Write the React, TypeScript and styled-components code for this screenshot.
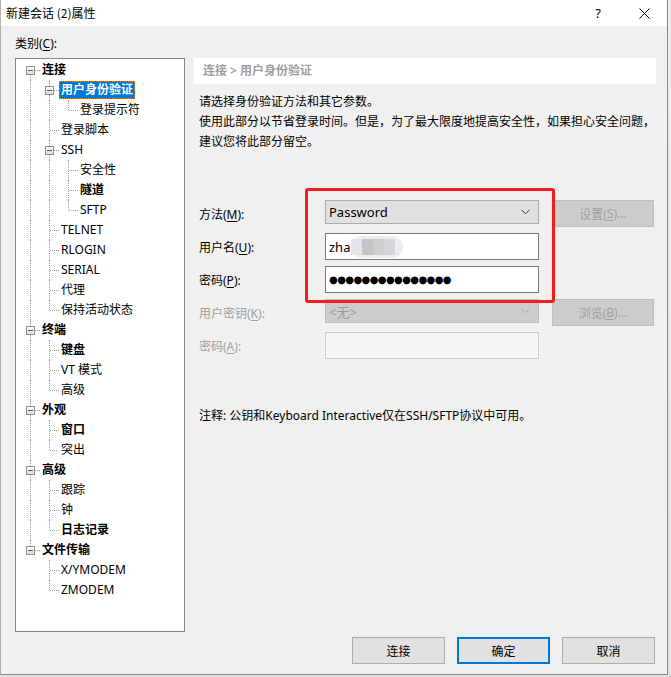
import React from "react";
import styled, { createGlobalStyle, css } from "styled-components";

const GlobalStyle = createGlobalStyle`
  html, body {
    margin: 0;
    padding: 0;
    background: #d9d9d9;
  }
  body {
    font-family: "Noto Sans", "Noto Sans CJK SC", sans-serif;
    font-size: 12px;
    color: #000;
  }
`;

const Page = styled.div`
  width: 671px;
  height: 677px;
  overflow: hidden;
  background: linear-gradient(#ececec, #e0e0e0);
`;

const Window = styled.div`
  width: 668px;
  height: 675px;
  box-sizing: border-box;
  background: #f0f0f0;
  border-right: 1px solid #8a8a8a;
  border-bottom: 1px solid #8a8a8a;
  border-left: 1px solid #b0b0b0;
  display: flex;
  flex-direction: column;
`;

const TitleBar = styled.div`
  height: 26px;
  flex: none;
  background: #fff;
  display: flex;
  align-items: center;
`;

const Title = styled.div`
  flex: 1;
  padding-left: 5px;
  font-size: 12px;
  line-height: 26px;
  font-family: "Noto Sans CJK SC", sans-serif;
`;

const TitleButton = styled.div`
  width: 46px;
  height: 26px;
  display: flex;
  align-items: center;
  justify-content: center;
  font-size: 13px;
  font-family: "Noto Sans", sans-serif;
`;

const Body = styled.div`
  flex: 1;
  display: flex;
  flex-direction: column;
  padding: 9px 0 0 14px;
`;

const CategoryLabel = styled.div`
  height: 18px;
  line-height: 18px;
  margin-bottom: 5px;
`;

const Mnemonic = styled.span`
  text-decoration: underline;
  text-underline-offset: 2px;
`;

const MainRow = styled.div`
  display: flex;
  gap: 9px;
  height: 574px;
`;

const TreePanel = styled.div`
  width: 170px;
  box-sizing: border-box;
  background: #fff;
  border: 1px solid #828790;
  padding: 1px 0 0 5px;
`;

const TreeRow = styled.div`
  height: 20px;
  display: flex;
  align-items: center;
`;

const dotted = css`
  content: "";
  position: absolute;
  border-color: #a0a0a0;
  border-style: dotted;
  border-width: 0;
`;

const GuideCell = styled.div<{ $line: boolean }>`
  width: 19px;
  height: 20px;
  flex: none;
  position: relative;
  &::before {
    ${dotted};
    display: ${(p) => (p.$line ? "block" : "none")};
    left: 9px;
    top: 0;
    bottom: 0;
    border-left-width: 1px;
  }
`;

const ElbowCell = styled.div<{ $up: boolean; $down: boolean }>`
  width: 19px;
  height: 20px;
  flex: none;
  position: relative;
  &::before {
    ${dotted};
    left: 9px;
    top: ${(p) => (p.$up ? "0" : "10px")};
    bottom: ${(p) => (p.$down ? "0" : "10px")};
    border-left-width: 1px;
  }
  &::after {
    ${dotted};
    left: 10px;
    width: 9px;
    top: 10px;
    border-top-width: 1px;
  }
`;

const ExpandBox = styled.div`
  position: absolute;
  z-index: 1;
  left: 5px;
  top: 6px;
  width: 9px;
  height: 9px;
  box-sizing: border-box;
  border: 1px solid #919191;
  background: linear-gradient(#ffffff, #dcdcdc);
  &::after {
    content: "";
    position: absolute;
    left: 1px;
    top: 3px;
    width: 5px;
    height: 1px;
    background: #3f5a8c;
  }
`;

const NodeLabel = styled.span<{ $bold?: boolean; $selected?: boolean }>`
  padding: 0 2px;
  height: 18px;
  line-height: 18px;
  white-space: nowrap;
  font-weight: ${(p) => (p.$bold ? 700 : 400)};
  ${(p) =>
    p.$selected &&
    css`
      background: #0078d7;
      color: #fff;
      outline: 1px dotted #e08a00;
      outline-offset: -1px;
    `}
`;

const RightPanel = styled.div`
  width: 462px;
  display: flex;
  flex-direction: column;
  position: relative;
`;

const Breadcrumb = styled.div`
  height: 26px;
  line-height: 26px;
  background: #fff;
  padding-left: 9px;
  color: #a0a0a0;
  font-weight: 700;
`;

const Description = styled.div`
  margin-top: 8px;
  padding-left: 5px;
`;

const DescLine = styled.div`
  height: 20px;
  line-height: 20px;
`;

const FormGrid = styled.div`
  margin-top: 48px;
  padding-left: 5px;
  display: grid;
  grid-template-columns: 126px 214px 13px 102px;
  grid-auto-rows: 27px;
  row-gap: 6px;
`;

const FieldLabel = styled.div<{ $disabled?: boolean }>`
  grid-column: 1;
  align-self: center;
  color: ${(p) => (p.$disabled ? "#a0a0a0" : "#000")};
`;

const Select = styled.div<{ $disabled?: boolean }>`
  grid-column: 2;
  height: 24px;
  box-sizing: border-box;
  display: flex;
  align-items: center;
  justify-content: space-between;
  padding: 0 8px 0 3px;
  font-size: 13px;
  background: ${(p) => (p.$disabled ? "#cccccc" : "#e1e1e1")};
  border: 1px solid ${(p) => (p.$disabled ? "#bfbfbf" : "#adadad")};
  color: ${(p) => (p.$disabled ? "#9a9a9a" : "#000")};
`;

const Input = styled.div<{ $disabled?: boolean }>`
  grid-column: 2;
  height: 27px;
  box-sizing: border-box;
  display: flex;
  align-items: center;
  padding-left: 3px;
  font-size: 13px;
  background: ${(p) => (p.$disabled ? "#f5f5f5" : "#fff")};
  border: 1px solid ${(p) => (p.$disabled ? "#cccccc" : "#7a7a7a")};
`;

const Blurred = styled.span`
  display: inline-flex;
  align-items: center;
  width: 52px;
  height: 22px;
  margin-left: 1px;
  border-radius: 11px;
  background: #ededed;
  filter: blur(0.6px);
`;

const BlurBlock = styled.span<{ $shade: string }>`
  width: 11px;
  height: 16px;
  background: ${(p) => p.$shade};
`;

const Dots = styled.span`
  font-family: "DejaVu Sans", sans-serif;
  font-size: 10px;
  letter-spacing: -0.6px;
  line-height: 1;
`;

const SideButton = styled.div`
  grid-column: 4;
  height: 27px;
  box-sizing: border-box;
  display: flex;
  align-items: center;
  justify-content: center;
  background: #cccccc;
  border: 1px solid #bfbfbf;
  color: #a0a0a0;
`;

const Note = styled.div`
  margin-top: 47px;
  padding-left: 5px;
  line-height: 20px;
`;

const Highlight = styled.div`
  position: absolute;
  left: 111px;
  top: 130px;
  width: 250px;
  height: 115px;
  box-sizing: border-box;
  border: 3px solid #f41d1d;
  border-radius: 3px;
  pointer-events: none;
`;

const Footer = styled.div`
  margin-top: 5px;
  padding-right: 12px;
  display: flex;
  justify-content: flex-end;
  gap: 12px;
`;

const DialogButton = styled.div<{ $primary?: boolean }>`
  width: 93px;
  height: 27px;
  box-sizing: border-box;
  display: flex;
  align-items: center;
  justify-content: center;
  background: #e1e1e1;
  border: ${(p) => (p.$primary ? "2px solid #0078d7" : "1px solid #adadad")};
`;

type TreeNode = {
  label: string;
  bold?: boolean;
  selected?: boolean;
  children?: TreeNode[];
};

const tree: TreeNode[] = [
  {
    label: "连接",
    bold: true,
    children: [
      { label: "用户身份验证", bold: true, selected: true, children: [{ label: "登录提示符" }] },
      { label: "登录脚本" },
      { label: "SSH", children: [{ label: "安全性" }, { label: "隧道", bold: true }, { label: "SFTP" }] },
      { label: "TELNET" },
      { label: "RLOGIN" },
      { label: "SERIAL" },
      { label: "代理" },
      { label: "保持活动状态" },
    ],
  },
  { label: "终端", bold: true, children: [{ label: "键盘", bold: true }, { label: "VT 模式" }, { label: "高级" }] },
  { label: "外观", bold: true, children: [{ label: "窗口", bold: true }, { label: "突出" }] },
  { label: "高级", bold: true, children: [{ label: "跟踪" }, { label: "钟" }, { label: "日志记录", bold: true }] },
  { label: "文件传输", bold: true, children: [{ label: "X/YMODEM" }, { label: "ZMODEM" }] },
];

type FlatRow = {
  node: TreeNode;
  guides: boolean[];
  up: boolean;
  down: boolean;
};

const flatten = (nodes: TreeNode[], guides: boolean[], root: boolean): FlatRow[] =>
  nodes.flatMap((node, i) => {
    const last = i === nodes.length - 1;
    const row: FlatRow = { node, guides, up: !(root && i === 0), down: !last };
    const kids = node.children ? flatten(node.children, [...guides, !last], false) : [];
    return [row, ...kids];
  });

const rows = flatten(tree, [], true);

const Chevron = ({ color }: { color: string }) => (
  <svg width="9" height="6" viewBox="0 0 9 6">
    <path d="M0.5 0.8 L4.5 4.8 L8.5 0.8" fill="none" stroke={color} strokeWidth="1" />
  </svg>
);

const CloseIcon = () => (
  <svg width="11" height="11" viewBox="0 0 11 11">
    <path d="M0.5 0.5 L10.5 10.5 M10.5 0.5 L0.5 10.5" stroke="#000" strokeWidth="1" />
  </svg>
);

const App = () => (
  <Page>
    <GlobalStyle />
    <Window>
      <TitleBar>
        <Title>新建会话 (2)属性</Title>
        <TitleButton>?</TitleButton>
        <TitleButton>
          <CloseIcon />
        </TitleButton>
      </TitleBar>
      <Body>
        <CategoryLabel>
          类别(<Mnemonic>C</Mnemonic>):
        </CategoryLabel>
        <MainRow>
          <TreePanel>
            {rows.map((r, i) => (
              <TreeRow key={i}>
                {r.guides.map((g, j) => (
                  <GuideCell key={j} $line={g} />
                ))}
                <ElbowCell $up={r.up} $down={r.down}>
                  {r.node.children && <ExpandBox />}
                </ElbowCell>
                <NodeLabel $bold={r.node.bold} $selected={r.node.selected}>
                  {r.node.label}
                </NodeLabel>
              </TreeRow>
            ))}
          </TreePanel>
          <RightPanel>
            <Breadcrumb>连接 &gt; 用户身份验证</Breadcrumb>
            <Description>
              <DescLine>请选择身份验证方法和其它参数。</DescLine>
              <DescLine>使用此部分以节省登录时间。但是，为了最大限度地提高安全性，如果担心安全问题，</DescLine>
              <DescLine>建议您将此部分留空。</DescLine>
            </Description>
            <FormGrid>
              <FieldLabel>
                方法(<Mnemonic>M</Mnemonic>):
              </FieldLabel>
              <Select>
                Password
                <Chevron color="#333" />
              </Select>
              <SideButton>
                设置(<Mnemonic>S</Mnemonic>)...
              </SideButton>

              <FieldLabel>
                用户名(<Mnemonic>U</Mnemonic>):
              </FieldLabel>
              <Input>
                zha
                <Blurred>
                  <BlurBlock $shade="#e4e4e6" />
                  <BlurBlock $shade="#c4c3c8" />
                  <BlurBlock $shade="#cfcfcf" />
                  <BlurBlock $shade="#d6d6da" />
                </Blurred>
              </Input>

              <FieldLabel>
                密码(<Mnemonic>P</Mnemonic>):
              </FieldLabel>
              <Input>
                <Dots>●●●●●●●●●●●●●●●</Dots>
              </Input>

              <FieldLabel $disabled>
                用户密钥(<Mnemonic>K</Mnemonic>):
              </FieldLabel>
              <Select $disabled>
                &lt;无&gt;
                <Chevron color="#aaa" />
              </Select>
              <SideButton>
                浏览(<Mnemonic>B</Mnemonic>)...
              </SideButton>

              <FieldLabel $disabled>
                密码(<Mnemonic>A</Mnemonic>):
              </FieldLabel>
              <Input $disabled />
            </FormGrid>
            <Note>注释: 公钥和Keyboard Interactive仅在SSH/SFTP协议中可用。</Note>
            <Highlight />
          </RightPanel>
        </MainRow>
        <Footer>
          <DialogButton>连接</DialogButton>
          <DialogButton $primary>确定</DialogButton>
          <DialogButton>取消</DialogButton>
        </Footer>
      </Body>
    </Window>
  </Page>
);

export default App;
